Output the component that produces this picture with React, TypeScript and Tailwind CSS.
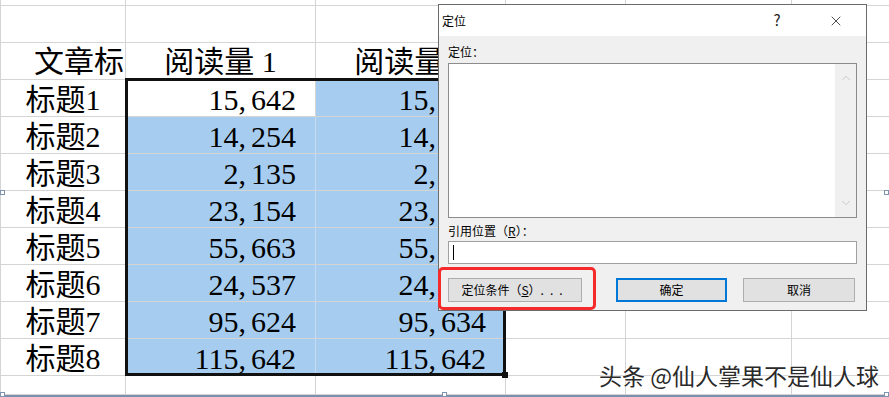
import { X, ChevronUp, ChevronDown } from 'lucide-react';

type Row = { title: string; b: string; c: string };

const rows: Row[] = [
  { title: '标题1', b: '15,642', c: '15,642' },
  { title: '标题2', b: '14,254', c: '14,254' },
  { title: '标题3', b: '2,135', c: '2,135' },
  { title: '标题4', b: '23,154', c: '23,154' },
  { title: '标题5', b: '55,663', c: '55,663' },
  { title: '标题6', b: '24,537', c: '24,537' },
  { title: '标题7', b: '95,624', c: '95,634' },
  { title: '标题8', b: '115,642', c: '115,642' },
];

const grid = 'border-r border-[#d4d4d4]';
const blueGrid = 'border-r border-[#c6dbef]';

function Num({ value }: { value: string }) {
  const [head, tail] = value.split(',');
  return (
    <>
      {head}
      <span className="mr-[5px]">,</span>
      {tail}
    </>
  );
}

function EmptyRow({ h }: { h: string }) {
  return (
    <div className={`flex border-l border-b border-[#d4d4d4] ${h}`}>
      <div className={`w-[125px] ${grid}`} />
      <div className={`w-[190px] ${grid}`} />
      <div className={`w-[190px] ${grid}`} />
      <div className={`w-[120px] ${grid}`} />
      <div className={`w-[166px] ${grid}`} />
      <div className="flex-1" />
    </div>
  );
}

function Sheet() {
  return (
    <div className="font-['Liberation_Serif','Noto_Sans_CJK_SC',serif] text-[30px] text-black">
      <EmptyRow h="h-[6px]" />
      <EmptyRow h="h-[37px]" />
      {/* header row */}
      <div className="flex h-[37px] border-l border-b border-[#d4d4d4]">
        <div className={`w-[125px] overflow-hidden whitespace-nowrap pl-[33px] pt-[1px] leading-[36px] ${grid}`}>
          文章标题
        </div>
        <div className={`w-[190px] pt-[1px] text-center leading-[36px] ${grid}`}>阅读量 1</div>
        <div className={`w-[190px] pt-[1px] text-center leading-[36px] ${grid}`}>阅读量 2</div>
        <div className={`w-[120px] ${grid}`} />
        <div className={`w-[166px] ${grid}`} />
        <div className="flex-1" />
      </div>
      {rows.map((r, idx) => (
        <div key={r.title} className="flex h-[37px] border-l border-b border-[#d4d4d4]">
          <div className={`w-[125px] pt-[3px] text-center leading-[33px] ${grid}`}>{r.title}</div>
          <div
            className={`w-[190px] pr-[19px] pt-[3px] text-right leading-[33px] ${
              idx === 0 ? `bg-white ${grid}` : `bg-[#a6cdf0] ${blueGrid}`
            }`}
          >
            <Num value={r.b} />
          </div>
          <div className={`w-[190px] bg-[#a6cdf0] pr-[19px] pt-[3px] text-right leading-[33px] ${grid}`}>
            <Num value={r.c} />
          </div>
          <div className={`w-[120px] ${grid}`} />
          <div className={`w-[166px] ${grid}`} />
          <div className="flex-1" />
        </div>
      ))}
      <EmptyRow h="h-[19px]" />
    </div>
  );
}

function GotoDialog() {
  return (
    <div className="absolute left-[438px] top-[4px] w-[429px] h-[307px] border border-[#6b6b6b] bg-[#f0f0f0] font-['Noto_Sans_CJK_SC',sans-serif] text-[12px] text-black flex flex-col">
      <div className="h-[31px] bg-white flex items-center pl-[3px]">
        <span className="flex-1">定位</span>
        <span className="w-[20px] text-center text-[15px] text-[#222] mr-[41px]">?</span>
        <X size={16} strokeWidth={1.2} className="mr-[22px] text-[#222]" />
      </div>
      <div className="flex flex-col px-[9px] pt-[7px]">
        <div className="leading-[17px]">定位：</div>
        <div className="mt-[3px] h-[155px] w-[409px] border border-[#8c8c8c] bg-white flex justify-end">
          <div className="w-[21px] bg-[#f0f0f0] flex flex-col items-center justify-between py-[7px]">
            <ChevronUp size={14} strokeWidth={1.5} className="text-[#c4c4c4]" />
            <ChevronDown size={14} strokeWidth={1.5} className="text-[#c4c4c4]" />
          </div>
        </div>
        <div className="mt-[4px] leading-[17px]">
          引用位置（<span className="underline">R</span>）：
        </div>
        <div className="mt-[2px] h-[23px] w-[409px] border border-[#a0a0a0] bg-white flex items-center pl-[4px]">
          <div className="w-px h-[15px] bg-black" />
        </div>
        <div className="mt-[14px] flex h-[24px]">
          <div className="relative w-[134px] border border-[#adadad] bg-[#e1e1e1] flex items-center justify-center">
            定位条件（<span className="underline">S</span>）<span className="tracking-[6px]">...</span>
            <div className="absolute -left-[11px] -top-[12px] w-[158px] h-[43px] border-[3px] border-[#f52a2a] rounded-[5px]" />
          </div>
          <div className="ml-[34px] w-[111px] border-2 border-[#0078d7] bg-[#e1e1e1] flex items-center justify-center">
            确定
          </div>
          <div className="ml-[16px] w-[112px] border border-[#adadad] bg-[#e1e1e1] flex items-center justify-center">
            取消
          </div>
        </div>
      </div>
    </div>
  );
}

function Handle({ pos }: { pos: string }) {
  return <div className={`absolute w-[5px] h-[5px] border border-[#7d93b0] bg-white ${pos}`} />;
}

export default function App() {
  return (
    <div className="relative w-[889px] h-[397px] overflow-hidden bg-white">
      <Sheet />
      <div className="h-[2px] bg-[#7a90ae]" />

      {/* selection outline + fill handle */}
      <div className="absolute left-[125px] top-[78px] w-[381px] h-[298px] border-[3px] border-[#111]" />
      <div className="absolute left-[502px] top-[372px] w-[6px] h-[6px] bg-[#111]" />

      <GotoDialog />

      <div className="absolute left-[599px] top-[358px] font-['Noto_Sans_CJK_SC',sans-serif] text-[23px] text-[#2a2a2a] [text-shadow:0_0_2px_#fff,0_0_2px_#fff]">
        头条 @仙人掌果不是仙人球
      </div>

      <Handle pos="left-0 top-[190px]" />
      <Handle pos="right-0 top-[190px]" />
      <Handle pos="left-0 top-[392px]" />
      <Handle pos="left-[442px] top-[392px]" />
      <Handle pos="right-0 top-[392px]" />
    </div>
  );
}
